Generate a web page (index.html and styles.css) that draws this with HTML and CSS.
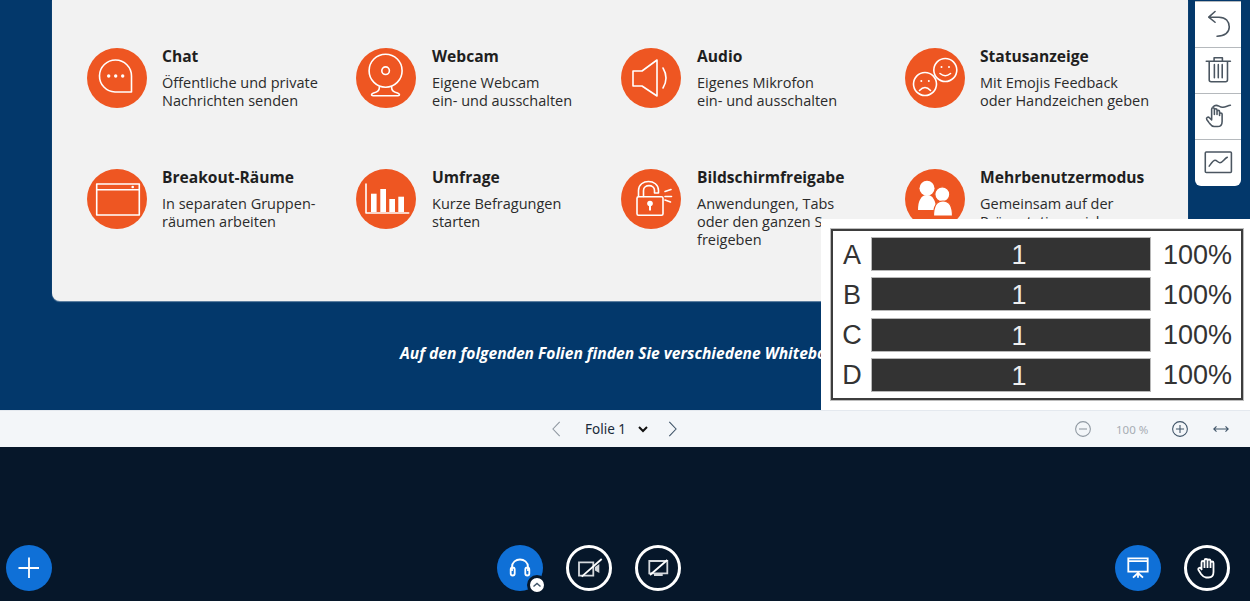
FILE: index.html
```html
<!DOCTYPE html>
<html lang="de">
<head>
    <meta charset="UTF-8">
    <title>Folie 1</title>
    <link rel="stylesheet" href="styles.css">
</head>
<body>
    <div class="slide-area">
        <div class="slide-card">
            <div class="feature">
                <svg class="feature-icon" viewBox="0 0 60 60">
                    <circle class="disc" cx="30" cy="30" r="30"/>
                    <path class="line" d="M44.5 44H28A16 16 0 1 1 44.5 28Z"/>
                    <circle class="fill" cx="21.7" cy="28" r="1.7"/>
                    <circle class="fill" cx="28.7" cy="28" r="1.7"/>
                    <circle class="fill" cx="35.7" cy="28" r="1.7"/>
                </svg>
                <div class="feature-text">
                    <h3>Chat</h3>
                    <p>Öffentliche und private<br>Nachrichten senden</p>
                </div>
            </div>
            <div class="feature">
                <svg class="feature-icon" viewBox="0 0 60 60">
                    <circle class="disc" cx="30" cy="30" r="30"/>
                    <circle class="line" cx="29.6" cy="22.7" r="16.5"/>
                    <circle class="line" cx="29.6" cy="22.7" r="3.8"/>
                    <path class="line" d="M23.5 38.5C23.5 43 21 44 17.5 45C15 45.8 15 47.7 17 47.7H42C44 47.7 44 45.8 41.5 45C38 44 35.5 43 35.5 38.5"/>
                </svg>
                <div class="feature-text">
                    <h3>Webcam</h3>
                    <p>Eigene Webcam<br>ein- und ausschalten</p>
                </div>
            </div>
            <div class="feature">
                <svg class="feature-icon" viewBox="0 0 60 60">
                    <circle class="disc" cx="30" cy="30" r="30"/>
                    <path class="line" d="M21 23L36 12V48L21 38H12V23Z"/>
                    <path class="line" d="M42 20Q48 30 42 40"/>
                </svg>
                <div class="feature-text">
                    <h3>Audio</h3>
                    <p>Eigenes Mikrofon<br>ein- und ausschalten</p>
                </div>
            </div>
            <div class="feature">
                <svg class="feature-icon" viewBox="0 0 60 60">
                    <circle class="disc" cx="30" cy="30" r="30"/>
                    <circle class="line" cx="40.3" cy="22" r="11.5"/>
                    <circle class="fill" cx="36.5" cy="19" r="1"/>
                    <circle class="fill" cx="44" cy="19" r="1"/>
                    <path class="line" d="M35 25.5Q40.3 30 45.5 25.5"/>
                    <circle class="line" cx="20" cy="36" r="11.5"/>
                    <circle class="fill" cx="16.3" cy="33" r="1"/>
                    <circle class="fill" cx="23.8" cy="33" r="1"/>
                    <path class="line" d="M14.5 42.5Q20 36.5 25.5 42.5"/>
                </svg>
                <div class="feature-text">
                    <h3>Statusanzeige</h3>
                    <p>Mit Emojis Feedback<br>oder Handzeichen geben</p>
                </div>
            </div>
            <div class="feature">
                <svg class="feature-icon" viewBox="0 0 60 60">
                    <circle class="disc" cx="30" cy="30" r="30"/>
                    <rect class="line" x="9.7" y="15" width="42.6" height="31"/>
                    <path class="line" d="M9.7 20.7H52.3"/>
                    <circle class="fill" cx="45.7" cy="18" r="1.3"/>
                </svg>
                <div class="feature-text">
                    <h3>Breakout-Räume</h3>
                    <p>In separaten Gruppen-<br>räumen arbeiten</p>
                </div>
            </div>
            <div class="feature">
                <svg class="feature-icon" viewBox="0 0 60 60">
                    <circle class="disc" cx="30" cy="30" r="30"/>
                    <path class="line" d="M10 15V44H52.7"/>
                    <rect class="fill" x="15" y="24.7" width="5.6" height="18.3"/>
                    <rect class="fill" x="24.3" y="20" width="5.7" height="23"/>
                    <rect class="fill" x="33.3" y="30" width="5.7" height="13"/>
                    <rect class="fill" x="42.3" y="27.7" width="5.7" height="15.3"/>
                </svg>
                <div class="feature-text">
                    <h3>Umfrage</h3>
                    <p>Kurze Befragungen<br>starten</p>
                </div>
            </div>
            <div class="feature">
                <svg class="feature-icon" viewBox="0 0 60 60">
                    <circle class="disc" cx="30" cy="30" r="30"/>
                    <rect class="line" x="16" y="27.7" width="26" height="18.6" rx="1.5"/>
                    <path class="line" d="M17.5 27.5V21.5C17.5 9.5 37.5 9.5 37.5 21.5V24H33.5V21.5C33.5 15 22.5 15 22.5 21.5V27.5"/>
                    <circle class="fill" cx="29" cy="34.5" r="2.8"/>
                    <rect class="fill" x="28" y="35" width="2" height="6.5"/>
                    <path class="line" d="M44 22.5L50 20.5M44 27.5H50.5M44 31L49.5 33"/>
                </svg>
                <div class="feature-text">
                    <h3>Bildschirmfreigabe</h3>
                    <p>Anwendungen, Tabs<br>oder den ganzen Screen<br>freigeben</p>
                </div>
            </div>
            <div class="feature">
                <svg class="feature-icon" viewBox="0 0 60 60">
                    <circle class="disc" cx="30" cy="30" r="30"/>
                    <circle class="fill" cx="22" cy="19.3" r="7.5"/>
                    <path class="fill" d="M13 41C13 32 16 26 22 26C28 26 31 32 31 41Z"/>
                    <circle class="fill halo" cx="37.3" cy="25.3" r="7.5"/>
                    <path class="fill halo" d="M28.5 47C28.5 37 31.5 32 38 32C44.5 32 47.5 37 47.5 47Z"/>
                </svg>
                <div class="feature-text">
                    <h3>Mehrbenutzermodus</h3>
                    <p>Gemeinsam auf der<br>Präsentation zeichnen</p>
                </div>
            </div>
        </div>
        <p class="slide-caption">Auf den folgenden Folien finden Sie verschiedene Whitebo</p>

        <div class="draw-tools">
            <button class="draw-tool">
                <svg viewBox="0 0 46 46"><path d="M13.5 15.5H24C31 15.5 34.5 20 34.5 25.5C34.5 31 30 35 22 35M20 9.7L13.5 15.5L20 20.7"/></svg>
            </button>
            <button class="draw-tool">
                <svg viewBox="0 0 46 46"><path d="M11 13.5H35.7M19 13V10H27.5V13M14 13.5V32.5Q14 34.5 16 34.5H30.7Q32.7 34.5 32.7 32.5V13.5M19.3 17V30.5M23.3 17V30.5M27.3 17V30.5"/></svg>
            </button>
            <button class="draw-tool">
                <svg viewBox="0 0 46 46"><path d="M18 13C22 9 24 14 28 13.5C31 13 33 12 35.7 11.5"/><path d="M16.5 26V15.5C16.5 13.5 19.3 13.5 19.3 15.5V21M19.3 20V16.5C19.3 14.7 22 14.7 22 16.5V21M22 21V18C22 16.3 24.6 16.3 24.6 18V22M24.6 22V20.5C24.6 19 27.2 19 27.2 20.5V28C27.2 31 25.5 33.3 22.5 33.3H19C16.5 33.3 15.5 31.5 14 29.5L11.5 26C10.5 24 13 23 14.2 24.3L16.5 26.5"/></svg>
            </button>
            <button class="draw-tool">
                <svg viewBox="0 0 46 46"><rect x="10" y="12.3" width="26.7" height="21" rx="1"/><path d="M14 26.7C16 24 18 20.7 20 20.7C22 20.7 23 23.3 25 23.3C27.5 23.3 29.5 19 32.5 17.7"/></svg>
            </button>
        </div>

        <div class="poll-popup">
            <div class="poll-frame">
                <div class="poll-row">
                    <span class="poll-key">A</span>
                    <span class="poll-bar">1</span>
                    <span class="poll-pct">100%</span>
                </div>
                <div class="poll-row">
                    <span class="poll-key">B</span>
                    <span class="poll-bar">1</span>
                    <span class="poll-pct">100%</span>
                </div>
                <div class="poll-row">
                    <span class="poll-key">C</span>
                    <span class="poll-bar">1</span>
                    <span class="poll-pct">100%</span>
                </div>
                <div class="poll-row">
                    <span class="poll-key">D</span>
                    <span class="poll-bar">1</span>
                    <span class="poll-pct">100%</span>
                </div>
            </div>
        </div>
    </div>

    <div class="slide-nav">
        <svg class="nav-icon nav-prev dim" viewBox="0 0 20 20"><path d="M13 2L5.5 10L13 18"/></svg>
        <span class="slide-name">Folie 1</span>
        <svg class="nav-caret" viewBox="0 0 12 12"><path d="M2 4L6 8L10 4"/></svg>
        <svg class="nav-icon nav-next" viewBox="0 0 20 20"><path d="M7 2L14.5 10L7 18"/></svg>
        <svg class="nav-icon zoom-out dim" viewBox="0 0 20 20"><circle cx="10" cy="10" r="8.2"/><path d="M5.5 10H14.5"/></svg>
        <span class="zoom-value">100 %</span>
        <svg class="nav-icon zoom-in" viewBox="0 0 20 20"><circle cx="10" cy="10" r="8.2"/><path d="M5.5 10H14.5M10 5.5V14.5"/></svg>
        <svg class="nav-icon zoom-fit" viewBox="0 0 20 20"><path d="M2 10H18M5 7L2 10L5 13M15 7L18 10L15 13"/></svg>
    </div>

    <div class="action-bar">
        <button class="round-btn solid">
            <svg viewBox="0 0 46 46"><path d="M12.5 23H33M23 12.5V33"/></svg>
        </button>
        <div class="center-btns">
            <button class="round-btn solid has-badge">
                <svg viewBox="0 0 46 46"><path d="M15 26V22C15 12 31 12 31 22V26"/><rect x="13.7" y="22.5" width="4" height="8" rx="2"/><rect x="28.3" y="22.5" width="4" height="8" rx="2"/></svg>
                <span class="btn-badge"><svg viewBox="0 0 14 14"><path d="M3.5 8.5L7 5.5L10.5 8.5"/></svg></span>
            </button>
            <button class="round-btn outline">
                <svg viewBox="0 0 40 40"><path class="grey" d="M10 14.3H24.3V27.7H10Z"/><path class="lens" d="M26 19L30.3 16V25L26 22.5Z"/><path d="M12.7 28.7L32.7 11"/></svg>
            </button>
            <button class="round-btn outline">
                <svg viewBox="0 0 40 40"><path class="grey" d="M11.3 13H29.3V25.3H11.3ZM16 27H24.7"/><path d="M12 27L29.3 12"/></svg>
            </button>
        </div>
        <div class="right-btns">
            <button class="round-btn solid">
                <svg viewBox="0 0 46 46"><path d="M13.3 13.3H32.7V26.7H13.3ZM13.3 16.2H32.7M23 26.7V32.7M23 28L18 32.7M23 28L28 32.7"/></svg>
            </button>
            <button class="round-btn outline">
                <svg viewBox="0 0 40 40"><path d="M14.5 21V14.5C14.5 12.5 17.5 12.5 17.5 14.5V20M17.5 20V12.5C17.5 10.5 20.5 10.5 20.5 12.5V20M20.5 20V13C20.5 11 23.5 11 23.5 13V20M23.5 20V15C23.5 13 26.5 13 26.5 15V24C26.5 27.5 24.5 29.5 21.5 29.5H19C16.5 29.5 15.5 28 14 26L11.5 22C10.5 20 13 19 14 20.5L15 22"/></svg>
            </button>
        </div>
    </div>
</body>
</html>
```

FILE: styles.css
```css
* {
    box-sizing: border-box;
}

body {
    margin: 0;
    height: 601px;
    overflow: hidden;
    display: flex;
    flex-direction: column;
    font-family: "Open Sans", sans-serif;
    background-color: #06172a;
}

/* slide */

.slide-area {
    position: relative;
    height: 410px;
    overflow: hidden;
    padding-left: 52px;
    background-color: #03386b;
}

.slide-card {
    width: 1136px;
    height: 301px;
    padding: 47.5px 0 0 35px;
    display: grid;
    grid-template-columns: 269px 265px 284px 1fr;
    grid-auto-rows: 121px;
    background-color: #f2f2f2;
    border-radius: 0 0 8px 8px;
    box-shadow: 0 1px 1px rgba(255, 255, 255, 0.4);
}

.feature {
    display: flex;
    gap: 15px;
}

.feature:nth-child(4n+2) .feature-text,
.feature:nth-child(4n+3) .feature-text {
    margin-left: 1px;
}

.feature-icon {
    flex: none;
    width: 60px;
    height: 60px;
}

.disc {
    fill: #ee5622;
}

.line {
    fill: none;
    stroke: #fff;
    stroke-width: 1.6;
    stroke-linecap: round;
    stroke-linejoin: round;
}

.fill {
    fill: #fff;
}

.halo {
    stroke: #ee5622;
    stroke-width: 1.2;
}

.feature-text h3 {
    margin: -0.5px 0 0;
    font-size: 15.6px;
    line-height: 18px;
    font-weight: 700;
    color: #1f1f1f;
}

.feature-text p {
    margin: 9px 0 0;
    font-size: 14.5px;
    line-height: 18px;
    color: #2b2b2b;
}

.slide-caption {
    margin: 42px 0 0 348px;
    font-size: 15.6px;
    line-height: 20px;
    font-weight: 700;
    font-style: italic;
    color: #fff;
    white-space: nowrap;
}

/* whiteboard tools */

.draw-tools {
    position: absolute;
    top: 1px;
    right: 9px;
    width: 46px;
    padding-bottom: 1px;
    display: flex;
    flex-direction: column;
    background-color: #fff;
    border-radius: 0 0 6px 6px;
    overflow: hidden;
}

.draw-tool {
    height: 46px;
    padding: 0;
    border: none;
    border-top: 1px solid #b5b9bd;
    background: none;
}

.draw-tool svg {
    display: block;
    width: 46px;
    height: 45px;
    fill: none;
    stroke: #4b5661;
    stroke-width: 1.6;
    stroke-linecap: round;
    stroke-linejoin: round;
}

/* poll result */

.poll-popup {
    position: absolute;
    top: 219px;
    left: 821px;
    width: 429px;
    height: 191px;
    padding: 10px 7px 10px 10px;
    background-color: #fff;
}

.poll-frame {
    height: 171px;
    padding: 6px 8px 6px 0;
    display: flex;
    flex-direction: column;
    gap: 6.3px;
    border: 2px solid #3d3d3d;
    outline: 1px solid #bdbdbd;
    font-family: "Liberation Sans", Arial, sans-serif;
    font-size: 27px;
    color: #333;
}

.poll-row {
    height: 34px;
    padding-top: 2px;
    display: flex;
    align-items: center;
}

.poll-key {
    width: 38px;
    text-align: center;
}

.poll-bar {
    width: 280px;
    height: 34px;
    margin-top: -2px;
    padding: 2px 0 0 16px;
    line-height: 32px;
    text-align: center;
    color: #eee;
    background-color: #333;
    outline: 1px solid #b8b8b8;
    outline-offset: -1px;
}

.poll-pct {
    margin-left: 12px;
}

/* slide navigation */

.slide-nav {
    height: 37px;
    display: flex;
    align-items: center;
    padding-left: 548px;
    background-color: #f3f6f9;
    border-top: 1px solid #e4e9ef;
    font-family: "Noto Sans", sans-serif;
}

.nav-icon {
    flex: none;
    width: 18px;
    height: 18px;
    fill: none;
    stroke: #3f5468;
    stroke-width: 1.2;
}

.nav-icon.dim {
    stroke: #8f98a1;
}

.slide-name {
    margin-left: 19px;
    font-size: 13.5px;
    color: #1a2a3a;
}

.nav-caret {
    width: 12px;
    height: 12px;
    margin-left: 11px;
    fill: none;
    stroke: #111;
    stroke-width: 2;
}

.nav-next {
    margin-left: 14px;
}

.zoom-out {
    margin-left: 393px;
}

.zoom-value {
    margin-left: 24px;
    font-size: 11.5px;
    color: #a7adb4;
    white-space: nowrap;
}

.zoom-in {
    margin-left: 23px;
}

.zoom-fit {
    margin-left: 23px;
}

/* action bar */

.action-bar {
    flex: 1;
    display: flex;
    align-items: flex-end;
    padding: 0 20px 10px 6px;
}

.round-btn {
    position: relative;
    width: 46px;
    height: 46px;
    padding: 0;
    border-radius: 50%;
    background: none;
}

.round-btn svg {
    display: block;
    fill: none;
    stroke: #fff;
    stroke-width: 1.8;
}

.round-btn .grey {
    stroke: #d4d8dc;
}

.round-btn .lens {
    fill: #d4d8dc;
    stroke: none;
}

.round-btn.solid {
    border: none;
    background-color: #0f70d7;
}

.round-btn.solid > svg {
    width: 46px;
    height: 46px;
}

.round-btn.outline {
    border: 3px solid #fff;
}

.round-btn.outline > svg {
    width: 40px;
    height: 40px;
}

.btn-badge {
    position: absolute;
    right: -4px;
    bottom: -4px;
    width: 20px;
    height: 20px;
    padding: 3px;
    border-radius: 50%;
    background-color: #fff;
    border: 3px solid #06172a;
}

.btn-badge svg {
    width: 14px;
    height: 14px;
    margin: -3px;
    stroke: #3f5468;
    stroke-width: 1.4;
}

.center-btns,
.right-btns {
    display: flex;
    gap: 23px;
}

.center-btns {
    margin-left: 445px;
}

.right-btns {
    margin-left: auto;
}
```
